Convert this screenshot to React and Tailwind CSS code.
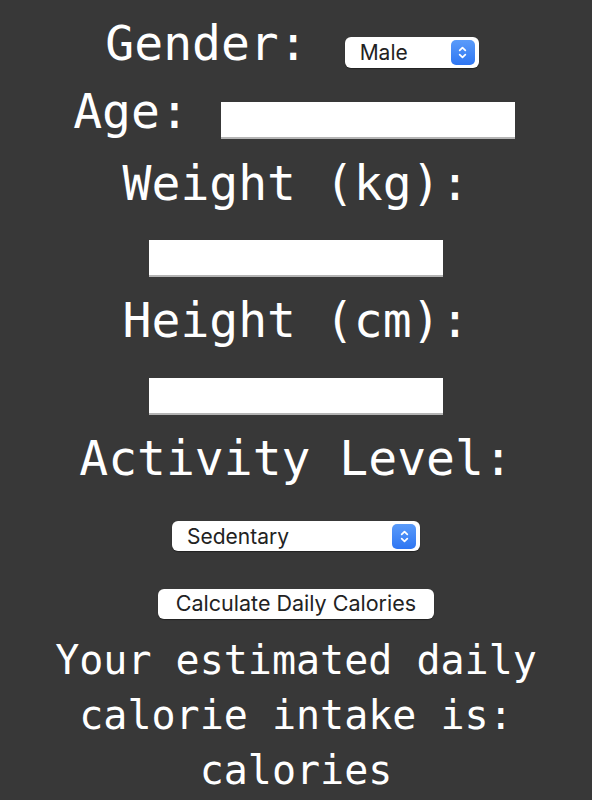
import React from 'react'

const mono = { fontFamily: '"DejaVu Sans Mono", "Liberation Mono", monospace' }
const sans = { fontFamily: 'Inter, "Liberation Sans", sans-serif' }

const Chevrons = () => (
  <svg viewBox="0 0 24 24" className="w-[17px] h-[17px]" fill="none" stroke="white" strokeWidth="2.4" strokeLinecap="round" strokeLinejoin="round">
    <path d="M8 9l4-4 4 4" />
    <path d="M8 15l4 4 4-4" />
  </svg>
)

const FakeSelect = ({ value, className }) => (
  <div
    className={`flex items-center justify-between bg-white rounded-[6px] shadow-[0_1px_1px_rgba(0,0,0,0.4)] pl-[15px] pr-[4px] text-[21px] text-[#222] ${className}`}
    style={sans}
  >
    <span className="leading-none">{value}</span>
    <div className="w-[24px] h-[25px] rounded-[5px] bg-gradient-to-b from-[#5a9bfa] to-[#2f76f2] flex items-center justify-center">
      <Chevrons />
    </div>
  </div>
)

const TextBox = ({ className = '' }) => (
  <div className={`w-[294px] h-[37px] bg-white border-b-2 border-[#b4b4b4] ${className}`} />
)

export default function App() {
  return (
    <div className="min-h-[800px] bg-[#383838] text-white flex flex-col items-center overflow-hidden" style={mono}>
      <div className="mt-[19px] h-[48px] flex items-start gap-[37px] pr-2">
        <span className="text-[48px] leading-[48px]">Gender:</span>
        <FakeSelect value="Male" className="mt-[18px] w-[134px] h-[31px]" />
      </div>

      <div className="mt-[20px] h-[48px] flex items-start gap-[32px] pr-1">
        <span className="text-[48px] leading-[48px]">Age:</span>
        <TextBox className="mt-[15px]" />
      </div>

      <div className="mt-[24px] text-[48px] leading-[48px]">Weight (kg):</div>
      <TextBox className="mt-[33px]" />

      <div className="mt-[19px] text-[48px] leading-[48px]">Height (cm):</div>
      <TextBox className="mt-[34px]" />

      <div className="mt-[19px] text-[48px] leading-[48px]">Activity Level:</div>
      <FakeSelect value="Sedentary" className="mt-[39px] w-[248px] h-[30px]" />

      <button
        className="mt-[38px] w-[276px] h-[30px] bg-white rounded-[6px] shadow-[0_1px_1px_rgba(0,0,0,0.4)] text-[21.5px] text-[#222] leading-none"
        style={sans}
      >
        Calculate Daily Calories
      </button>

      <p className="mt-[14px] max-w-[500px] text-center text-[40px] leading-[55px]">
        Your estimated daily calorie intake is: calories
      </p>
    </div>
  )
}
